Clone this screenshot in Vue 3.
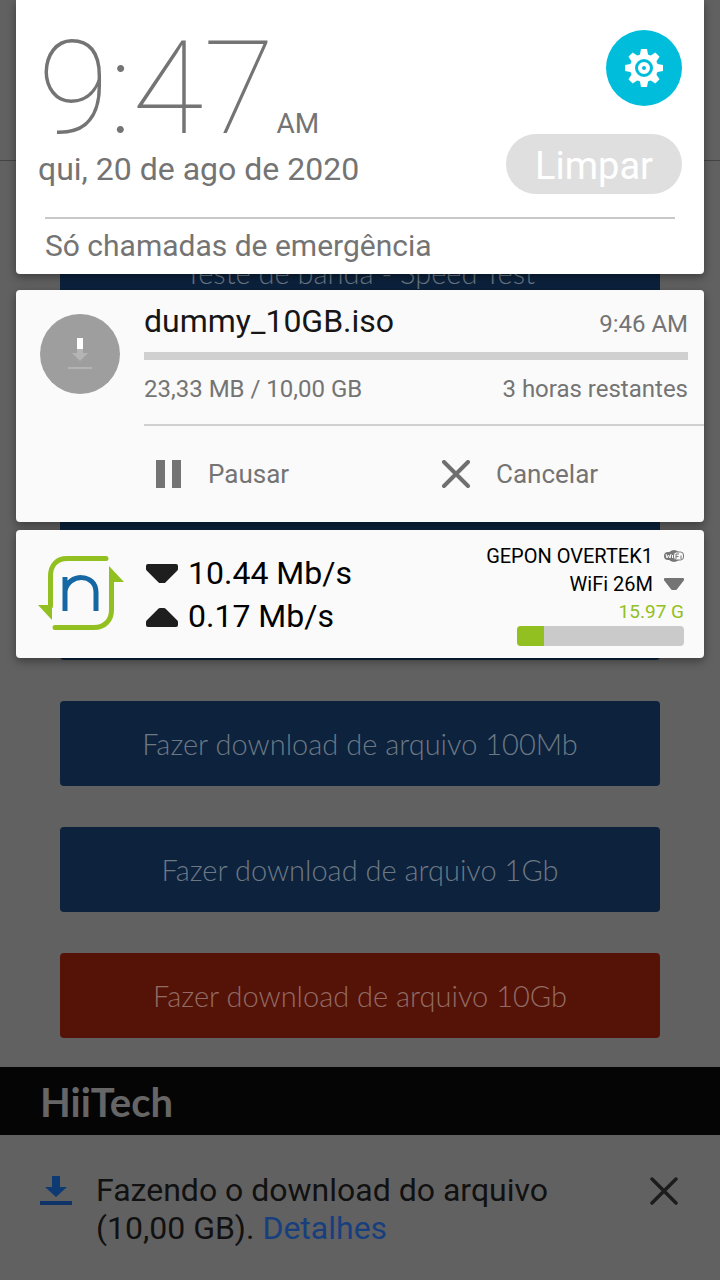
<template>
  <div class="screen">
    <!-- page under the notification shade -->
    <div class="page">
      <header class="page-head"></header>

      <main class="page-main">
        <a class="btn speed-test" href="#">Teste de banda - Speed Test</a>
        <div class="downloads">
          <span class="btn"></span>
          <span class="btn"></span>
          <a v-for="file in files" :key="file.size" class="btn" :class="{ red: file.active }" href="#">
            Fazer download de arquivo {{ file.size }}
          </a>
        </div>
      </main>

      <footer class="page-foot">HiiTech</footer>

      <!-- download info bar -->
      <div class="infobar">
        <svg class="infobar-icon" viewBox="0 0 32 30">
          <path d="M12 0h8v11h7L16 21 5 11h7z" fill="#0e3a73" />
          <path d="M0 25h32v4H0z" fill="#0e3468" />
        </svg>
        <p class="infobar-text">
          Fazendo o download do arquivo (10,00 GB). <a href="#">Detalhes</a>
        </p>
        <button class="icon-btn" aria-label="Fechar">
          <svg width="28" height="28" viewBox="0 0 28 28">
            <path d="M2 2l24 24M26 2L2 26" stroke="#1c1c1c" stroke-width="3.500" stroke-linecap="round" />
          </svg>
        </button>
      </div>
    </div>

    <!-- notification shade -->
    <div class="shade">
      <section class="card status">
        <div class="status-top">
          <div class="when">
            <div class="clock">
              <span class="clock-time">9:47</span><span class="clock-ampm">AM</span>
            </div>
            <div class="date">qui, 20 de ago de 2020</div>
          </div>
          <div class="status-actions">
            <button class="settings" aria-label="Configurações">
              <svg width="40" height="40" viewBox="-20 -20 40 40">
                <g fill="#fff">
                  <path v-for="a in teeth" :key="a" d="M-3-19h6l1.500 8h-9z" :transform="`rotate(${a})`" />
                </g>
                <circle r="11.500" fill="none" stroke="#fff" stroke-width="5" />
                <circle r="4" fill="none" stroke="#fff" stroke-width="4" />
              </svg>
            </button>
            <button class="clear">Limpar</button>
          </div>
        </div>
        <div class="carrier">Só chamadas de emergência</div>
      </section>

      <section class="card download">
        <div class="download-icon">
          <svg width="26" height="34" viewBox="0 0 26 34">
            <path d="M10 1h6v11h-6z" fill="#fff" />
            <path d="M10 12h6v4h5l-8 8-8-8h5z" fill="#b4b4b4" />
            <path d="M1 30h24v2H1z" fill="#b4b4b4" />
          </svg>
        </div>
        <div class="download-body">
          <div class="row title-row">
            <span class="title">dummy_10GB.iso</span>
            <span class="small">9:46 AM</span>
          </div>
          <div class="track" role="progressbar" aria-valuenow="0"></div>
          <div class="row small">
            <span>23,33 MB / 10,00 GB</span>
            <span>3 horas restantes</span>
          </div>
          <div class="actions">
            <button class="action">
              <svg width="48" height="28" viewBox="0 0 48 28">
                <path d="M12 0h9v28h-9zM28 0h9v28h-9z" fill="#747474" />
              </svg>
              Pausar
            </button>
            <button class="action">
              <svg width="48" height="28" viewBox="0 0 48 28">
                <path d="M12 2l24 24M36 2L12 26" stroke="#6f6f6f" stroke-width="4" stroke-linecap="round" />
              </svg>
              Cancelar
            </button>
          </div>
        </div>
      </section>

      <section class="card network">
        <svg class="logo" width="86" height="78" viewBox="0 0 86 78">
          <g fill="none" stroke="#92c020" stroke-width="5">
            <path d="M12.500 52V22C12.500 11 19 4.500 29 4.500H68" stroke-linecap="round" />
            <path d="M17 73.500H56C67 73.500 73.500 66 73.500 56V26" stroke-linecap="round" />
          </g>
          <path d="M0 51h14v15z" fill="#92c020" />
          <path d="M71 12v16h15z" fill="#92c020" />
          <path d="M27 57V23M27 37C30 19 58 19 58 38V57" fill="none" stroke="#1668a5" stroke-width="5" />
        </svg>
        <div class="speeds">
          <div class="speed">
            <svg width="32" height="20" viewBox="0 0 32 20">
              <path d="M2 2h28v3L18 17h-4L2 5z" fill="#1e1e1e" stroke="#1e1e1e" stroke-width="4" stroke-linejoin="round" />
            </svg>
            10.44 Mb/s
          </div>
          <div class="speed">
            <svg width="32" height="20" viewBox="0 0 32 20">
              <path d="M2 18h28v-3L18 3h-4L2 15z" fill="#1e1e1e" stroke="#1e1e1e" stroke-width="4" stroke-linejoin="round" />
            </svg>
            0.17 Mb/s
          </div>
        </div>
        <div class="usage">
          <div class="usage-line">
            GEPON OVERTEK1
            <svg width="20" height="12" viewBox="0 0 20 12">
              <rect x="0" y="2" width="13" height="8" rx="4" fill="#777" />
              <circle cx="10" cy="6" r="6" fill="#777" />
              <rect x="9.500" y="2" width="10" height="8" rx="3" fill="#fafafa" stroke="#777" />
              <path d="M2 4l1 4 1.500-3L6 8l1-4M8.500 5v3" fill="none" stroke="#fff" />
              <path d="M12 9V4h3M12 6.500h2.500M17 5.500V9" fill="none" stroke="#777" />
            </svg>
          </div>
          <div class="usage-line">
            WiFi 26M
            <svg width="20" height="12" viewBox="0 0 20 12">
              <path d="M1 1h18v1l-7 9H8L1 2z" fill="#747474" stroke="#747474" stroke-width="2" stroke-linejoin="round" />
            </svg>
          </div>
          <div class="quota">15.97 G</div>
          <div class="quota-bar" role="progressbar" :aria-valuenow="quota">
            <div class="quota-fill" :style="{ width: quota + '%' }"></div>
          </div>
        </div>
      </section>
    </div>
  </div>
</template>

<script setup>
import { ref } from 'vue'

const files = ref([
  { size: '100Mb', active: false },
  { size: '1Gb', active: false },
  { size: '10Gb', active: true },
])

// percent of the data plan already used
const quota = ref(16)

// angles of the gear teeth
const teeth = [0, 45, 90, 135, 180, 225, 270, 315]
</script>

<style>
body {
  margin: 0;
  background: #616161;
}
</style>

<style scoped>
* {
  box-sizing: border-box;
}

.screen {
  position: relative;
  min-height: 100vh;
  overflow: hidden;
  font-family: Roboto, 'Liberation Sans', sans-serif;
  color: #747474;
}

button {
  border: 0;
  padding: 0;
  background: none;
  font: inherit;
  color: inherit;
}

svg {
  display: block;
  flex: none;
}

/* page */
.page {
  display: flex;
  flex-direction: column;
  min-height: 100vh;
  background: #616161;
}

.page-head {
  height: 161px;
  border-bottom: 1px solid #444;
}

.page-main {
  padding: 69px 60px 29px;
}

.btn {
  display: flex;
  align-items: center;
  justify-content: center;
  height: 85px;
  border-radius: 4px;
  background: #0c223d;
  color: #6c7884;
  font-family: Lato, 'Open Sans', sans-serif;
  font-size: 29px;
  font-weight: 300;
  text-decoration: none;
}

.btn.red {
  background: #551308;
  color: #926b64;
}

.speed-test {
  margin-bottom: 134px;
}

.downloads {
  display: flex;
  flex-direction: column;
  gap: 41px;
}

.page-foot {
  padding: 2px 40px 0;
  background: #050505;
  color: #666;
  font-family: Lato, 'Open Sans', sans-serif;
  font-size: 40px;
  font-weight: 700;
  line-height: 66px;
}

.infobar {
  display: flex;
  flex: 1;
  align-items: flex-start;
  padding: 36px 42px 20px 40px;
}

.infobar-icon {
  width: 32px;
  height: 30px;
  margin-top: 5px;
}

.infobar-text {
  flex: 1;
  max-width: 480px;
  margin: 0 auto 0 24px;
  color: #111;
  font-size: 32px;
  line-height: 38px;
}

.infobar-text a {
  color: #183f7d;
  text-decoration: none;
}

.icon-btn {
  margin-top: 6px;
}

/* shade */
.shade {
  position: absolute;
  top: 0;
  left: 0;
  right: 0;
  padding: 0 16px;
}

.card {
  border-radius: 4px;
  background: #fafafa;
  box-shadow: 0 3px 10px rgba(0, 0, 0, 0.4);
}

.status {
  margin-bottom: 16px;
  padding: 30px 22px 10px;
  border-radius: 0 0 4px 4px;
  background: #fff;
}

.status-top {
  display: flex;
  justify-content: space-between;
}

.when {
  padding-top: 7px;
}

.clock {
  display: flex;
  align-items: baseline;
  gap: 2px;
  height: 104px;
  line-height: 104px;
}

.clock-time {
  font-size: 130px;
  font-weight: 100;
}

.clock-ampm {
  font-size: 28px;
}

.date {
  margin-top: 10px;
  font-size: 32px;
  line-height: 36px;
}

.status-actions {
  display: flex;
  flex-direction: column;
  align-items: flex-end;
  gap: 28px;
}

.settings {
  display: grid;
  place-items: center;
  width: 76px;
  height: 76px;
  border-radius: 50%;
  background: #00bedb;
}

.clear {
  height: 60px;
  padding: 4px 29px 0;
  border-radius: 30px;
  background: #dfdfdf;
  color: #fff;
  font-size: 38px;
}

.carrier {
  margin: 23px 7px 0;
  padding-top: 9px;
  border-top: 2px solid #c8c8c8;
  font-size: 30px;
  line-height: 36px;
}

.download {
  display: flex;
  gap: 24px;
  margin-bottom: 8px;
  padding-left: 24px;
}

.download-icon {
  display: grid;
  flex: none;
  place-items: center;
  width: 80px;
  height: 80px;
  margin-top: 24px;
  border-radius: 50%;
  background: #9e9e9e;
}

.download-body {
  flex: 1;
}

.row {
  display: flex;
  align-items: baseline;
  justify-content: space-between;
  margin-right: 16px;
}

.title-row {
  padding: 11px 0 8px;
  line-height: 40px;
}

.title {
  color: #161616;
  font-size: 32px;
}

.small {
  font-size: 24px;
}

.track {
  height: 8px;
  margin: 0 16px 15px 0;
  background: #d0d0d0;
}

.actions {
  display: grid;
  grid-template-columns: 1fr 1fr;
  column-gap: 16px;
  margin-top: 21px;
  border-top: 2px solid #d0d0d0;
}

.action {
  display: flex;
  align-items: center;
  gap: 16px;
  height: 96px;
  font-size: 26px;
}

.network {
  display: flex;
  height: 128px;
  padding: 0 20px 0 22px;
  color: #000;
}

.logo {
  margin-top: 24px;
}

.speeds {
  margin-left: 22px;
  padding-top: 22px;
}

.speed {
  display: flex;
  align-items: center;
  gap: 10px;
  font-size: 32px;
  line-height: 43px;
}

.usage {
  margin-left: auto;
  padding-top: 12px;
  width: 200px;
}

.usage-line {
  display: flex;
  align-items: center;
  justify-content: flex-end;
  gap: 11px;
  font-size: 20px;
  line-height: 28px;
  white-space: nowrap;
}

.quota {
  color: #92c020;
  font-size: 19px;
  line-height: 28px;
  text-align: right;
}

.quota-bar {
  height: 20px;
  width: 167px;
  margin-left: auto;
  border-radius: 4px;
  overflow: hidden;
  background: #cacaca;
}

.quota-fill {
  height: 100%;
  background: #92c020;
}
</style>
